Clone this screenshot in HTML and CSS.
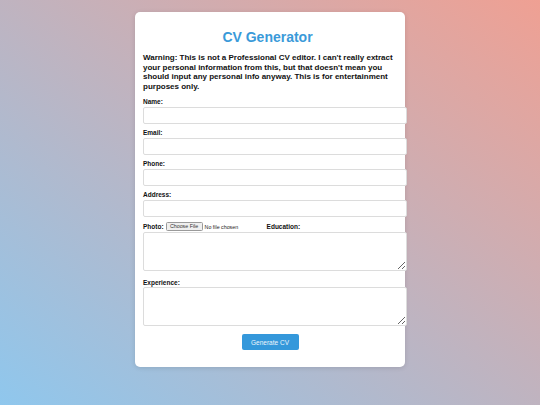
FILE: index.html
```html
<!DOCTYPE html>
<html>
<head>
<meta charset="utf-8">
<link rel="stylesheet" href="styles.css">
</head>
<body>
<div class="card">
  <h1 class="title">CV Generator</h1>
  <p class="warning">Warning: This is not a Professional CV editor. I can't really extract your personal information from this, but that doesn't mean you should input any personal info anyway. This is for entertainment purposes only.</p>
  <form class="form">
    <label class="label">Name:</label>
    <input class="field" type="text">
    <label class="label">Email:</label>
    <input class="field" type="text">
    <label class="label">Phone:</label>
    <input class="field" type="text">
    <label class="label">Address:</label>
    <input class="field" type="text">
    <div class="photo-row">
      <span class="label inline">Photo:</span>
      <span class="file"><span class="file-btn">Choose File</span><span class="file-text">No file chosen</span></span>
      <span class="label inline">Education:</span>
    </div>
    <textarea class="area"></textarea>
    <label class="label">Experience:</label>
    <textarea class="area"></textarea>
    <div class="actions">
      <button class="btn" type="button">Generate CV</button>
    </div>
  </form>
</div>
</body>
</html>
```

FILE: styles.css
```css
html, body {
  margin: 0;
  padding: 0;
  height: 100%;
}
body {
  background: linear-gradient(to top right, #8fc7ed, #efa093);
  font-family: "Liberation Sans", Arial, sans-serif;
  display: flex;
  justify-content: center;
  align-items: flex-start;
}
.card {
  box-sizing: border-box;
  width: 270px;
  margin-top: 12px;
  background: #fff;
  border-radius: 5px;
  padding: 0 8px 17px 8px;
  box-shadow: 0 1px 5px rgba(0,0,0,0.12);
}
.title {
  margin: 17px 0 8px 0;
  padding-right: 5px;
  font-size: 14px;
  line-height: 16px;
  color: #3a9ad9;
  text-align: center;
  font-weight: bold;
}
.warning {
  margin: 0 0 7px 0;
  font-size: 8px;
  line-height: 9.5px;
  font-weight: bold;
  color: #111;
}
.form {
  display: block;
}
.label {
  display: block;
  font-size: 6.5px;
  line-height: 8px;
  font-weight: bold;
  color: #111;
}
.label.inline {
  display: inline-block;
}
.field {
  display: block;
  box-sizing: content-box;
  width: 254px;
  height: 15px;
  padding: 0 4px;
  margin: 1px 0 5px 0;
  border: 1px solid #dcdcdc;
  border-radius: 2px;
  background: #fff;
  outline: none;
}
.photo-row {
  display: flex;
  align-items: center;
  height: 9px;
}
.file {
  display: inline-flex;
  align-items: center;
  width: 101px;
  margin-left: 2px;
}
.file-btn {
  box-sizing: border-box;
  width: 37px;
  height: 9px;
  line-height: 7px;
  text-align: center;
  font-size: 5.3px;
  color: #333;
  background: #efefef;
  border: 1px solid #9a9a9a;
  border-radius: 1.5px;
}
.file-text {
  margin-left: 2px;
  font-size: 5.3px;
  color: #222;
}
.area {
  display: block;
  box-sizing: content-box;
  width: 254px;
  height: 37px;
  padding: 0 4px;
  margin: 1px 0 8px 0;
  border: 1px solid #dcdcdc;
  border-radius: 2px;
  background: #fff;
  resize: vertical;
  outline: none;
}
.label + .area {
  margin-top: 0px;
}
.actions {
  display: flex;
  justify-content: center;
}
.btn {
  width: 57px;
  height: 16px;
  padding: 0;
  background: #3498db;
  color: #eef5fb;
  border: none;
  border-radius: 2px;
  font-family: "Liberation Sans", Arial, sans-serif;
  font-size: 6.5px;
}
```
